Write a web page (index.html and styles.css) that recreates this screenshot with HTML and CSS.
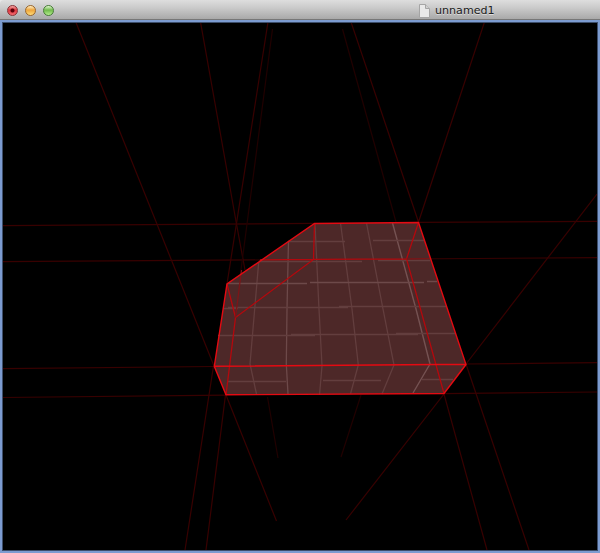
FILE: index.html
```html
<!DOCTYPE html>
<html lang="en">
<head>
<meta charset="utf-8">
<title>unnamed1</title>
<link rel="stylesheet" href="styles.css">
</head>
<body>
<div class="window">
  <header class="titlebar">
    <div class="controls">
      <span class="light close"></span>
      <span class="light minimize"></span>
      <span class="light maximize"></span>
    </div>
    <div class="title">
      <svg class="doc" viewBox="0 0 11 14"><path class="page" d="M.5.5h6l4 4v9H.5z"/><path class="fold" d="M6.5.5v4h4"/></svg>
      <span>unnamed1</span>
    </div>
  </header>
  <main class="viewport">
    <svg class="scene" viewBox="3 23 594 527">
      <g class="guides">
        <path d="M75.8 22L214 366M226 395L276.5 521"/>
        <path d="M200.5 22L236.5 224L245 270"/>
        <path d="M268 22L227 284M213.5 366L185 550"/>
        <path d="M225.5 395L206 550"/>
        <path d="M3 225.6L314 223.4M418 222.4L597 221.4"/>
        <path d="M3 261.6L313 259.6M406 259L597 257.6"/>
        <path d="M3 368.6L214 366.5M466 364L597 362.6"/>
        <path d="M3 397.5L226 395.2M444 393.6L597 392"/>
        <path d="M351 22L418.5 222L484.5 22"/>
        <path d="M597 194L466 364L529 550M346 520L444 394L487 550"/>
        <path class="far" d="M272.5 29L241 270M342.5 29L396 222M361 395L341 457M267.5 397L278 458"/>
      </g>
      <path class="solid" d="M314.5 223.5L418.5 222.5L466 364.5L444 393.5L226 395L214.3 366.3L227 284Z"/>
      <g class="grid">
        <path d="M258.7 262L250 364L256.5 394"/>
        <path class="near" d="M288.5 241L287 309L286.3 364L288 394"/>
        <path d="M315 224L319 309L322 366L319.5 395"/>
        <path d="M340.5 223L352 309L358.3 365L350.5 394"/>
        <path d="M366.5 223L383 309L394 365L382 394"/>
        <path class="lit" d="M392.5 223L416 309L430 364L413 393"/>
        <path d="M288 241.5H345M373 240.5H424"/>
        <path d="M259 261.5H362M378 260.5H430"/>
        <path class="near" d="M228 283.5H307M310 282.5H424M427 281.5H437"/>
        <path d="M223 308.5H238M228 307.5H348M339 306.5H446"/>
        <path d="M218 335.5H315M291 334.5H418M396 333.5H456"/>
        <path d="M228 381.5H286M323 380.5H381M422 379.5H453"/>
      </g>
      <g class="hidden-edges">
        <path d="M260 259.9L313.5 259.4L406.5 258.8L444 393.5M314.5 223.5L313.5 259.5L235.5 317.5L226 395M418.5 222.5L406.5 259M227 284L235.5 317.5"/>
        <path class="trace" d="M241.5 270L235.5 317.5M406.5 259L430 258.7"/>
      </g>
      <path class="outline" d="M314.5 223.5L418.5 222.5L466 364.5L444 393.5L226 394.8L214.3 366.3L227 284ZM214.3 366.3L466 364.3"/>
    </svg>
  </main>
</div>
</body>
</html>
```

FILE: styles.css
```css
* { box-sizing: border-box; }
body { margin: 0; background: #e8e8e8; }
.window {
  display: flex;
  flex-direction: column;
  width: 600px;
  height: 553px;
  overflow: hidden;
}
.titlebar {
  display: flex;
  flex: none;
  align-items: center;
  height: 20px;
  padding-left: 7px;
  border-bottom: 1px solid #777;
  border-radius: 4px 0 0 0;
  background: linear-gradient(#dedede, #c8c8c8 45%, #a9a9a9);
}
.controls {
  display: flex;
  gap: 7px;
  width: 412px;
  padding-top: 1px;
}
.light {
  width: 11px;
  height: 11px;
  border: 1px solid;
  border-radius: 50%;
}
.close {
  border-color: #8b3034;
  background: radial-gradient(circle at 50% 50%, #5d0009 0 1.5px, transparent 2.5px), linear-gradient(#f3a7a4, #dd343c 45%, #f46b70);
}
.minimize {
  border-color: #99652b;
  background: linear-gradient(#fff0c6, #eea53b 45%, #ffdc78);
}
.maximize {
  border-color: #467b36;
  background: linear-gradient(#e3f8d1, #70ba4c 45%, #b4ed8c);
}
.title {
  display: flex;
  align-items: center;
  gap: 5px;
  padding-top: 2px;
  color: #202020;
  font: 11.1px/14px "DejaVu Sans", "Open Sans", sans-serif;
  text-shadow: 0 1px 0 #ddd;
}
.title span { padding-top: 1px; }
.doc { width: 11px; height: 14px; }
.page { fill: #e9e9e9; stroke: #a5a5a5; }
.fold { fill: #d0d0d0; stroke: #a5a5a5; }
.viewport {
  flex: 1;
  min-height: 0;
  border: 2px solid #7c9bd0;
  background: #000;
}
.scene {
  display: block;
  width: 596px;
  height: 529px;
  border: 1px solid #3d4e6b;
  background: #000;
}
.scene path { fill: none; }
.guides { stroke: #380000; stroke-width: 1.2; }
.guides .far { stroke: #210000; }
.scene .solid { fill: #4d2828; }
.grid { stroke: #633e3e; stroke-width: 1.3; }
.grid .near { stroke: #6d4949; }
.grid .lit { stroke: #755252; stroke-width: 1.4; }
.hidden-edges { stroke: #b4080d; stroke-width: 1.3; }
.hidden-edges .trace { stroke: #7b1518; }
.scene .outline { stroke: #e40a12; stroke-width: 1.4; }
```
